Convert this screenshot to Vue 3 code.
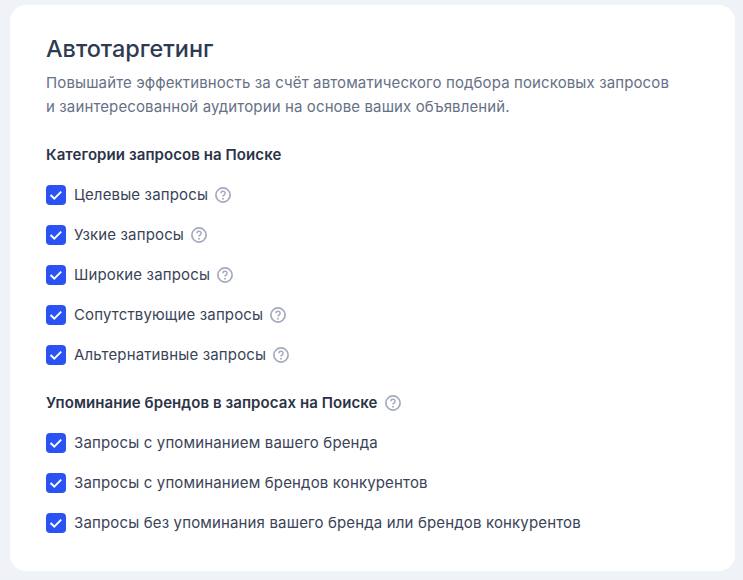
<script setup>
const searchItems = [
  { label: 'Целевые запросы', help: true },
  { label: 'Узкие запросы', help: true },
  { label: 'Широкие запросы', help: true },
  { label: 'Сопутствующие запросы', help: true },
  { label: 'Альтернативные запросы', help: true },
]
const brandItems = [
  { label: 'Запросы с упоминанием вашего бренда' },
  { label: 'Запросы с упоминанием брендов конкурентов' },
  { label: 'Запросы без упоминания вашего бренда или брендов конкурентов' },
]
</script>

<template>
  <div class="page">
    <section class="card">
      <h1 class="title">Автотаргетинг</h1>
      <p class="desc">Повышайте эффективность за счёт автоматического подбора поисковых запросов<br>и заинтересованной аудитории на основе ваших объявлений.</p>

      <div class="heading first"><span>Категории запросов на Поиске</span></div>
      <ul class="list">
        <li v-for="item in searchItems" :key="item.label" class="row">
          <span class="box"><svg width="20" height="20" viewBox="0 0 20 20"><path d="M4.6 10 8.3 13.6 15.2 6.6" fill="none" stroke="#fff" stroke-width="2" /></svg></span>
          <span class="label">{{ item.label }}</span>
          <svg class="help" width="16" height="16" viewBox="0 0 16 16"><circle cx="8" cy="8" r="7.1" fill="none" stroke="#a3a9bd" stroke-width="1.7" /><path d="M5.9 6.3a2.1 2.1 0 1 1 3.3 1.7c-.8.5-1.2.9-1.2 1.6" fill="none" stroke="#a3a9bd" stroke-width="1.5" /><circle cx="8" cy="11.7" r=".95" fill="#a3a9bd" /></svg>
        </li>
      </ul>

      <div class="heading second">
        <span>Упоминание брендов в запросах на Поиске</span>
        <svg class="help" width="16" height="16" viewBox="0 0 16 16"><circle cx="8" cy="8" r="7.1" fill="none" stroke="#a3a9bd" stroke-width="1.7" /><path d="M5.9 6.3a2.1 2.1 0 1 1 3.3 1.7c-.8.5-1.2.9-1.2 1.6" fill="none" stroke="#a3a9bd" stroke-width="1.5" /><circle cx="8" cy="11.7" r=".95" fill="#a3a9bd" /></svg>
      </div>
      <ul class="list">
        <li v-for="item in brandItems" :key="item.label" class="row">
          <span class="box"><svg width="20" height="20" viewBox="0 0 20 20"><path d="M4.6 10 8.3 13.6 15.2 6.6" fill="none" stroke="#fff" stroke-width="2" /></svg></span>
          <span class="label">{{ item.label }}</span>
        </li>
      </ul>
    </section>
  </div>
</template>

<style>
html, body { margin: 0; background: #eff3f8; }
</style>

<style scoped>
.page {
  width: 743px;
  height: 580px;
  box-sizing: border-box;
  padding: 5px 8px 9px 10px;
  overflow: hidden;
  background: #eff3f8;
  font-family: Inter, "Noto Sans", sans-serif;
}
.card {
  box-sizing: border-box;
  height: 566px;
  padding: 28px 36px 0;
  background: #fff;
  border-radius: 16px;
}
.title {
  margin: 0;
  font-size: 23.4px;
  line-height: 32px;
  font-weight: 500;
  color: #2f3a52;
}
.desc {
  margin: 6px 0 0;
  font-size: 15px;
  letter-spacing: 0.12px;
  line-height: 24px;
  color: #667086;
}
.heading {
  display: flex;
  align-items: center;
  gap: 7px;
  font-size: 15px;
  letter-spacing: 0.08px;
  line-height: 20px;
  font-weight: 600;
  color: #2b3347;
}
.first { margin-top: 26px; }
.second { margin-top: 18px; }
.list {
  list-style: none;
  margin: 10px 0 0;
  padding: 0;
}
.row {
  display: flex;
  align-items: center;
  height: 40px;
}
.box {
  display: flex;
  flex: none;
  width: 20px;
  height: 20px;
  margin-right: 8px;
  align-items: center;
  justify-content: center;
  background: #2b52f5;
  border-radius: 4px;
}
.label {
  font-size: 15px;
  letter-spacing: 0.15px;
  line-height: 20px;
  color: #3a4358;
}
.help {
  flex: none;
  margin-left: 7px;
}
.heading .help { margin-left: 0; }
</style>
